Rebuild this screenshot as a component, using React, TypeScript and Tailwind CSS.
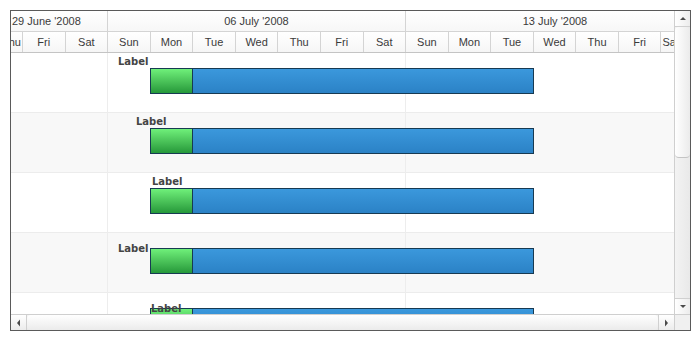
const days = ["Thu", "Fri", "Sat", "Sun", "Mon", "Tue", "Wed", "Thu", "Fri", "Sat", "Sun", "Mon", "Tue", "Wed", "Thu", "Fri", "Sat"];

const rows = [
  { labelX: 107, labelY: 3 },
  { labelX: 125, labelY: 3 },
  { labelX: 141, labelY: 3 },
  { labelX: 107, labelY: 10 },
  { labelX: 140, labelY: 10 },
];

function Arrow({ dir }: { dir: "up" | "down" | "left" | "right" }) {
  const d = {
    up: "M1 4 L4 1 L7 4 Z",
    down: "M1 1 L4 4 L7 1 Z",
    left: "M4 0.5 L1 4 L4 7.5 Z",
    right: "M1 0.5 L4 4 L1 7.5 Z",
  }[dir];
  const vertical = dir === "up" || dir === "down";
  return (
    <svg width={vertical ? 8 : 5} height={vertical ? 5 : 8} viewBox={vertical ? "0 0 8 5" : "0 0 5 8"}>
      <path d={d} fill="#4a4a4a" />
    </svg>
  );
}

function Bar() {
  return (
    <div className="absolute left-[139px] top-[15px] z-10 flex h-[26px] w-[384px] border border-[#173a52]">
      <div className="w-[42px] shrink-0 border-r border-[#173a52] bg-gradient-to-b from-[#6ff07a] to-[#25993a]" />
      <div className="flex-1 bg-gradient-to-b from-[#3b98dc] to-[#2b82c6]" />
    </div>
  );
}

function dayClass(i: number) {
  if (i === 0)
    return "flex w-[12px] shrink-0 items-center justify-end overflow-hidden border-r border-[#d4d4d4] pr-px";
  if (i === days.length - 1)
    return "flex w-[13px] shrink-0 items-center justify-start overflow-hidden whitespace-nowrap pl-px";
  return "flex w-[42.57px] shrink-0 items-center justify-center overflow-hidden whitespace-nowrap border-r border-[#d4d4d4]";
}

export default function App() {
  return (
    <div className="h-[340px] w-[700px] bg-white p-[10px]">
      <div className="grid h-[321px] w-[681px] grid-cols-[1fr_16px] grid-rows-[1fr_16px] border border-[#5a5a5a] font-['Liberation_Sans',sans-serif] text-[11px] text-[#3a3a3a]">
        {/* timeline */}
        <div className="flex flex-col overflow-hidden">
          <div className="flex h-[21px] shrink-0 border-b border-[#d4d4d4] bg-gradient-to-b from-white to-[#f7f7f7]">
            <div className="flex w-[97px] shrink-0 items-center border-r border-[#d4d4d4] pl-px">29 June '2008</div>
            <div className="flex w-[298px] shrink-0 items-center justify-center border-r border-[#d4d4d4]">06 July '2008</div>
            <div className="flex w-[298px] shrink-0 items-center justify-center">13 July '2008</div>
          </div>
          <div className="flex h-[21px] shrink-0 border-b border-[#c4c4c4] bg-gradient-to-b from-white to-[#f6f6f6]">
            {days.map((d, i) => (
              <div key={i} className={dayClass(i)}>
                {d}
              </div>
            ))}
          </div>
          <div className="relative flex-1 overflow-hidden font-['DejaVu_Sans',sans-serif]">
            {rows.map((r, i) => (
              <div key={i} className={`relative h-[60px] border-b border-[#ececec] ${i % 2 === 1 ? "bg-[#f8f8f8]" : "bg-white"}`}>
                <Bar />
                <span
                  className="absolute z-10 text-[10px] font-bold leading-[12px] text-[#444]"
                  style={{ left: r.labelX, top: r.labelY }}
                >
                  Label
                </span>
              </div>
            ))}
            <div className="pointer-events-none absolute inset-y-0 left-[96px] z-[5] w-px bg-[#ededed]" />
            <div className="pointer-events-none absolute inset-y-0 left-[394px] z-[5] w-px bg-[#ededed]" />
          </div>
        </div>

        {/* vertical scrollbar */}
        <div className="flex flex-col border-l border-[#cfcfcf] bg-gradient-to-r from-[#f3f3f3] to-[#e9e9e9]">
          <div className="flex h-[16px] items-center justify-center border-b border-[#d0d0d0] bg-gradient-to-r from-white to-[#ececec]">
            <Arrow dir="up" />
          </div>
          <div className="h-[131px] rounded-sm border-b border-[#c4c4c4] bg-gradient-to-r from-white to-[#ebebeb]" />
          <div className="flex-1" />
          <div className="flex h-[16px] items-center justify-center border-t border-[#d0d0d0] bg-gradient-to-r from-white to-[#ececec]">
            <Arrow dir="down" />
          </div>
        </div>

        {/* horizontal scrollbar */}
        <div className="flex border-t border-[#cfcfcf] bg-gradient-to-b from-[#f3f3f3] to-[#e9e9e9]">
          <div className="flex w-[16px] items-center justify-center border-r border-[#d0d0d0] bg-gradient-to-b from-white to-[#ececec]">
            <Arrow dir="left" />
          </div>
          <div className="flex-1 rounded-sm bg-gradient-to-b from-white to-[#ebebeb]" />
          <div className="flex w-[16px] items-center justify-center border-l border-[#d0d0d0] bg-gradient-to-b from-white to-[#ececec]">
            <Arrow dir="right" />
          </div>
        </div>

        {/* corner */}
        <div className="border-l border-t border-[#cfcfcf] bg-[#f0f0f0]" />
      </div>
    </div>
  );
}
